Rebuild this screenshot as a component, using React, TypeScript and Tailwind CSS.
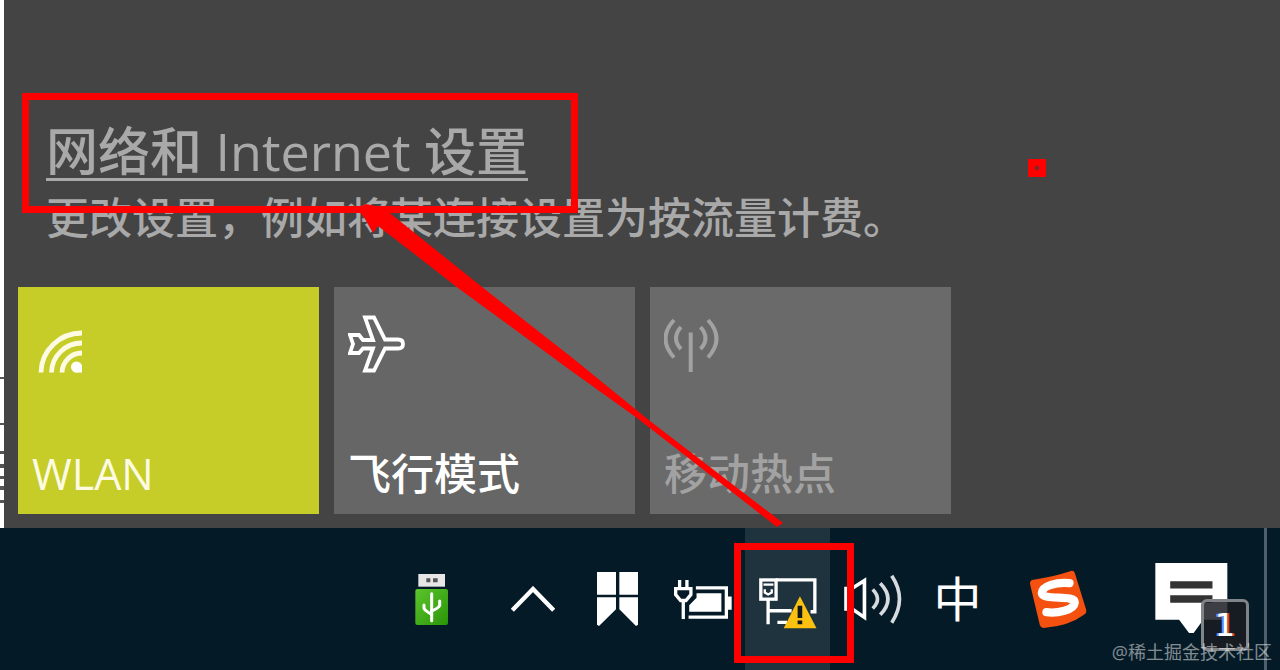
import type { ReactNode } from "react";
import clsx from "clsx";

const WifiIcon = () => (
  <svg width="60" height="60" viewBox="0 0 60 60" fill="none" stroke="#fdfbe4" strokeWidth="4.800">
    <path d="M9 57.500 A41 40 0 0 1 50 18" />
    <path d="M19.500 57.500 A30.500 30 0 0 1 50 28" />
    <path d="M30 57.500 A20 20 0 0 1 50 38" />
    <path d="M50 57.500 H44 A5 5 0 1 1 50 51 Z" fill="#fff" stroke="none" />
    <circle cx="44.500" cy="52" r="5.500" fill="#fff" stroke="none" />
  </svg>
);

const PlaneIcon = () => (
  <svg width="60" height="60" viewBox="0 0 60 60" fill="none" stroke="#fff" strokeWidth="3.800">
    <path d="M2 20 H11 L15 25 H25 L17 2.500 H26 L37 24.500 H50 Q55 24.500 55 29 Q55 33.500 50 33.500 H37 L26 55.500 H17 L25 33.500 H15 L11 38 H2 L5 29 Z" />
  </svg>
);

const HotspotIcon = () => (
  <svg width="60" height="60" viewBox="0 0 60 60" fill="none" stroke="#a2a2a2" strokeWidth="4">
    <path d="M26.700 17.500 V57" />
    <path d="M10 5 Q-7 23.500 10 42.500" />
    <path d="M17 12 Q7 23.500 17 34" />
    <path d="M36.500 12 Q46.500 23.500 36.500 34" />
    <path d="M44 5 Q61 23.500 44 42.500" />
  </svg>
);

const UsbIcon = () => (
  <svg width="34" height="53" viewBox="0 0 102 159">
    <defs>
      <linearGradient id="usb" x1="0" y1="0" x2="1" y2="1">
        <stop offset="0" stopColor="#5cc52c" />
        <stop offset="1" stopColor="#2a9408" />
      </linearGradient>
    </defs>
    <rect x="10" y="3" width="80" height="38" fill="#e6e6e6" />
    <path d="M34 16h12v12h-12zM54 16h14v12h-14z" fill="#555" />
    <rect x="1" y="48" width="98" height="108" rx="6" fill="url(#usb)" />
    <g fill="none" stroke="#fff" strokeWidth="9" strokeLinecap="round">
      <path d="M50 62 V143" />
      <path d="M27 96 V106 Q30 114 50 124" />
      <path d="M74 84 V98 Q70 106 50 114" />
    </g>
  </svg>
);

const ChevronIcon = () => (
  <svg width="44" height="26" viewBox="0 0 132 78" fill="none" stroke="#fff" strokeWidth="13">
    <path d="M4 73 L66 9 L128 73" />
  </svg>
);

const RibbonIcon = () => (
  <svg width="41" height="54" viewBox="0 0 123 162" fill="#fff">
    <path d="M0 0h57v68h-57zM67 0h56v68h-56z" />
    <path d="M0 76h57v36l-51 50l-6-4zM67 76h56v82l-6 4l-50-50z" />
  </svg>
);

const BatteryIcon = () => (
  <svg width="58" height="41" viewBox="0 0 175 122" fill="none" stroke="#fff" strokeWidth="10">
    <path d="M17 2 V24 M39 2 V24" />
    <path d="M5 28 H51 V46 L36 64 H20 L5 46 Z" />
    <path d="M28 64 V120" />
    <path d="M66 26 H158 V114 H44" />
    <path d="M161 52h13v40h-13z" fill="#fff" stroke="none" />
    <path d="M68 42h75v56h-97v-20l22-22z" fill="#fff" stroke="none" />
  </svg>
);

const NetworkIcon = () => (
  <svg width="58" height="59" viewBox="0 -24 174 178" fill="none" stroke="#fff" strokeWidth="10">
    <path d="M50 6 H168 V102 H155" />
    <path d="M27 65 V140 M27 99 H98 M55 134 H84" />
    <rect x="5" y="6" width="46" height="58" />
    <path d="M13 20 H43" strokeWidth="7" />
    <path d="M17 34 V44 L27 50 L38 44 V34" strokeWidth="7" />
    <path d="M123 55 L74 152 H173 Z" fill="#fcc010" stroke="none" />
    <path d="M116 84h14v37h-14zM116 128h14v12h-14z" fill="#10181c" stroke="none" />
  </svg>
);

const SpeakerIcon = () => (
  <svg width="58" height="50" viewBox="0 0 176 152" fill="none" stroke="#fff" strokeWidth="11">
    <path d="M6 44 V106 H24 L62 132 V20 L24 44 Z" />
    <g stroke="#d5dbdf">
      <path d="M87 47 Q116 76 87 105" />
      <path d="M110 28 Q157 76 110 124" />
      <path d="M145 5 Q192 76 145 148" />
    </g>
  </svg>
);

const SogouIcon = () => (
  <svg width="58" height="58" viewBox="0 0 174 176">
    <path d="M8 30 Q70 22 126 3 Q135 1 138 9 L173 122 Q174 130 167 135 Q120 170 44 176 Q35 176 32 168 L2 42 Q1 33 8 30 Z" fill="#f4500f" />
    <path
      d="M122 40 C84 36 38 48 38 70 C40 94 138 74 138 98 C136 122 84 132 52 128"
      fill="none"
      stroke="#fff"
      strokeWidth="25"
      strokeLinecap="round"
    />
  </svg>
);

const MessageIcon = () => (
  <svg width="73" height="72" viewBox="0 0 219 218">
    <path d="M0 0 H218 V172 H145 L116 212 H102 L72 172 H0 Z" fill="#fff" />
    <path d="M45 55h128v22h-128zM45 98h128v22h-128z" fill="#333" />
  </svg>
);

type TileProps = {
  icon: ReactNode;
  label: string;
  className: string;
  disabled?: boolean;
};

const Tile = ({ icon, label, className, disabled }: TileProps) => (
  <button
    disabled={disabled}
    className={clsx("flex h-[227px] w-[301px] flex-col items-start justify-between px-3.5 pt-7 pb-[18px] text-left", className)}
  >
    {icon}
    <span className="text-[43px] leading-[44px]">{label}</span>
  </button>
);

type TrayButtonProps = {
  label: string;
  className?: string;
  children: ReactNode;
};

const TrayButton = ({ label, className = "w-[85px]", children }: TrayButtonProps) => (
  <button aria-label={label} className={clsx("flex shrink-0 items-center justify-center", className)}>
    {children}
  </button>
);

export default function App() {
  return (
    <div className="relative flex min-h-screen flex-col overflow-hidden bg-[#444444] font-['Open_Sans','Noto_Sans_CJK_SC',sans-serif]">
      <main className="flex flex-1 font-medium">
        {/* Sliver of the window behind the flyout */}
        <div className="flex w-1 shrink-0 flex-col justify-end bg-white">
          <svg width="4" height="160" viewBox="0 0 4 160" fill="#555">
            <path d="M0 9h4v2h-4zM0 55h4v2h-4zM0 83h4v3h-4zM0 96h4v4h-4zM0 108h4v3h-4zM0 118h4v4h-4zM0 132h4v3h-4z" />
          </svg>
        </div>

        {/* Network flyout */}
        <section className="flex flex-1 flex-col justify-end pb-3.5 pl-3.5 text-[#a9a9a9]">
          <div className="px-7">
            <a href="#settings" className="inline-block border-b-3 border-[#a9a9a9] text-[52px] leading-[54px] whitespace-nowrap">
              网络和 Internet 设置
            </a>
            <p className="mt-3.5 mb-[46px] text-[43px] leading-[46px] whitespace-nowrap">更改设置，例如将某连接设置为按流量计费。</p>
          </div>

          <div className="flex gap-[15px]">
            <Tile icon={<WifiIcon />} label="WLAN" className="bg-[#c6cd28] text-[#fdfbe4]" />
            <Tile icon={<PlaneIcon />} label="飞行模式" className="bg-[#666666] text-white" />
            <Tile icon={<HotspotIcon />} label="移动热点" className="bg-[#6a6a6a] text-[#a2a2a2]" disabled />
          </div>
        </section>
      </main>

      {/* Taskbar */}
      <footer className="flex h-[142px] justify-end bg-[#041a26] text-white">
        <TrayButton label="USB" className="mr-4 w-[85px]">
          <UsbIcon />
        </TrayButton>
        <TrayButton label="Show hidden icons">
          <ChevronIcon />
        </TrayButton>
        <TrayButton label="Bookmarks">
          <RibbonIcon />
        </TrayButton>
        <TrayButton label="Battery">
          <BatteryIcon />
        </TrayButton>
        <TrayButton label="Network" className="w-[85px] bg-[#1f333f]">
          <NetworkIcon />
        </TrayButton>
        <TrayButton label="Volume">
          <SpeakerIcon />
        </TrayButton>
        <TrayButton label="Input language">
          <span className="text-[48px] leading-[48px]">中</span>
        </TrayButton>
        <TrayButton label="Sogou" className="w-[115px]">
          <SogouIcon />
        </TrayButton>
        <button aria-label="Notifications" className="flex w-[149px] items-center justify-end pr-3.5">
          <span className="relative block w-[95px]">
            <MessageIcon />
            <span className="absolute top-9 left-[46px] flex h-[52px] w-[48px] items-center justify-center rounded-md border-3 border-[#808488] bg-[#1b1c22]/85 font-['DejaVu_Sans'] text-[32px] leading-8 [text-shadow:-2px_0_#5b8cff,2px_0_#d8452c]">
              1
            </span>
          </span>
        </button>
        <button aria-label="Show desktop" className="w-4 border-l-3 border-[#4d606b]" />
      </footer>

      <span className="absolute right-2 bottom-1 text-[18px] leading-7 text-white/50">@稀土掘金技术社区</span>

      {/* Red markers */}
      <div className="pointer-events-none absolute top-[93px] left-[22px] h-[120px] w-[556px] border-7 border-[#ff0000]" />
      <div className="pointer-events-none absolute top-[543px] left-[734px] h-[120px] w-[120px] border-7 border-[#ff0000]" />
      <div className="pointer-events-none absolute top-[159px] left-[1028px] h-[18px] w-[18px] border-7 border-[#ff0000] bg-[#7a2a2a]" />
      <svg className="pointer-events-none absolute top-0 left-0" width="800" height="540" viewBox="0 0 800 540" fill="#ff0000">
        <path d="M357 208 L366 204 L384 208 L391 214 L482 287 L570 356 L650 421 L783 523 L777 527 L637 418 L570 370 L458 288 L417 256 L378 226 L373 233 L365 219 Z" />
      </svg>
    </div>
  );
}
